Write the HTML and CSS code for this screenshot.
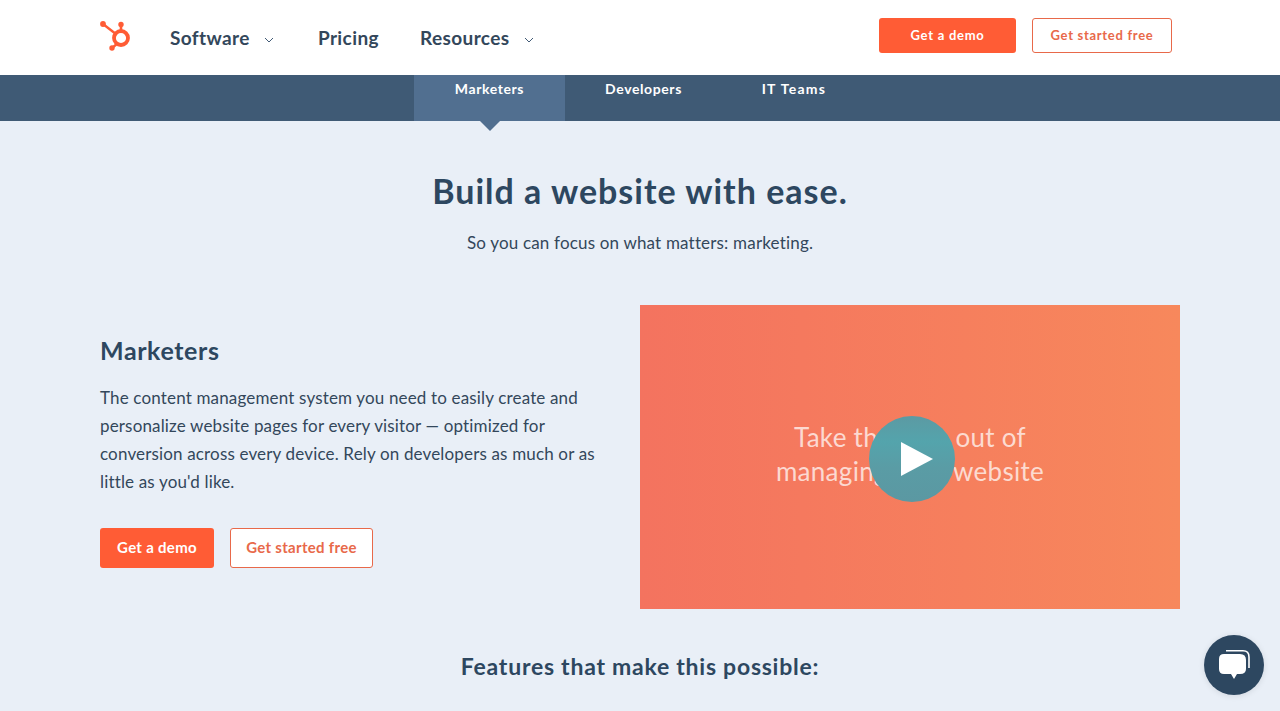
FILE: index.html
```html
<!DOCTYPE html>
<html lang="en">
<head>
<meta charset="utf-8">
<title>Build a website with ease</title>
<link rel="stylesheet" href="styles.css">
</head>
<body>
<header class="topbar">
  <div class="topbar-left">
    <a class="logo" href="#" aria-label="HubSpot">
      <svg width="32" height="33" viewBox="0 0 32 33" fill="none">
        <circle cx="21" cy="19" r="7" stroke="#ff5c35" stroke-width="3.800"/>
        <path d="M3 5 L16.500 15.500" stroke="#ff5c35" stroke-width="2.400"/>
        <circle cx="3" cy="5" r="2.900" fill="#ff5c35"/>
        <path d="M21 5 V12" stroke="#ff5c35" stroke-width="2.600"/>
        <circle cx="21" cy="5.500" r="2.700" fill="#ff5c35"/>
        <path d="M12 29 L17.500 24.500" stroke="#ff5c35" stroke-width="2.400"/>
        <circle cx="12" cy="29" r="2.700" fill="#ff5c35"/>
      </svg>
    </a>
    <nav class="mainnav">
      <a class="navitem navitem-software" href="#">Software<svg class="chev" width="10" height="6" viewBox="0 0 10 6"><path d="M1 1 L5 5 L9 1" fill="none" stroke="#425b76" stroke-width="1"/></svg></a>
      <a class="navitem navitem-pricing" href="#">Pricing</a>
      <a class="navitem" href="#">Resources<svg class="chev" width="10" height="6" viewBox="0 0 10 6"><path d="M1 1 L5 5 L9 1" fill="none" stroke="#425b76" stroke-width="1"/></svg></a>
    </nav>
  </div>
  <div class="topbar-right">
    <a class="btn btn-solid btn-small" href="#">Get a demo</a>
    <a class="btn btn-outline btn-small btn-small-outline" href="#">Get started free</a>
  </div>
</header>

<div class="tabs">
  <a class="tab tab-active" href="#">Marketers</a>
  <a class="tab" href="#">Developers</a>
  <a class="tab tab-wide" href="#">IT Teams</a>
</div>

<main class="content">
  <section class="intro">
    <h1>Build a website with ease.</h1>
    <p>So you can focus on what matters: marketing.</p>
  </section>

  <section class="feature">
    <div class="copy">
      <h2>Marketers</h2>
      <p>The content management system you need to easily create and personalize website pages for every visitor — optimized for conversion across every device. Rely on developers as much or as little as you'd like.</p>
      <div class="actions">
        <a class="btn btn-solid btn-large" href="#">Get a demo</a>
        <a class="btn btn-outline btn-large" href="#">Get started free</a>
      </div>
    </div>
    <div class="video">
      <div class="video-text">Take the pain out of<br>managing your website</div>
      <div class="play">
        <svg width="32" height="34" viewBox="0 0 32 34"><path d="M0 0 L32 17 L0 34 Z" fill="#fff"/></svg>
      </div>
    </div>
  </section>

  <h3 class="features-title">Features that make this possible:</h3>
</main>

<button class="chat" aria-label="Chat">
  <svg width="34" height="34" viewBox="0 0 34 34" fill="none">
    <path d="M9 2.800 H26 Q32 2.800 32 9 V20" stroke="#fff" stroke-width="1.600"/>
    <path d="M7 6 H23 Q29 6 29 12 V21 Q29 26 23 26 H20 L17 31 L14 26 H7 Q2 26 2 21 V11 Q2 6 7 6 Z" fill="#fff"/>
  </svg>
</button>
</body>
</html>
```
FILE: styles.css
```css
* { box-sizing: border-box; }
html, body { margin: 0; height: 711px; overflow: hidden; }
body {
  background: #e9eff7;
  color: #2d4760;
  font-family: "Lato", "Liberation Sans", sans-serif;
}
a { text-decoration: none; color: inherit; }

.topbar {
  height: 75px;
  background: #fff;
  display: flex;
  align-items: center;
  justify-content: space-between;
  padding: 0 108px 0 100px;
}
.topbar-left { display: flex; align-items: center; }
.logo { display: flex; width: 70px; height: 33px; margin-top: -4px; }
.mainnav { display: flex; align-items: center; }
.navitem {
  display: flex;
  align-items: center;
  font-size: 19px;
  font-weight: 700;
  letter-spacing: 0.4px;
  color: #33475b;
}
.navitem-software { margin-right: 44px; }
.navitem-pricing { margin-right: 41px; }
.chev { margin-left: 14px; margin-top: 4px; }

.topbar-right { display: flex; gap: 16px; margin-top: -4px; }
.btn {
  display: flex;
  align-items: center;
  justify-content: center;
  border-radius: 3px;
  padding-bottom: 2px;
  font-weight: 700;
  letter-spacing: 0.3px;
}
.btn-solid { background: #ff5c35; color: #fff; }
.btn-outline { background: #fff; color: #e8694a; border: 1px solid #e8694a; }
.btn-small { width: 137px; height: 35px; font-size: 13px; letter-spacing: 0.75px; }
.btn-small-outline { width: 140px; letter-spacing: 0.7px; }
.btn-large { height: 40px; font-size: 15px; }
.btn-large.btn-solid { width: 114px; }
.btn-large.btn-outline { width: 143px; }

.tabs {
  height: 46px;
  background: #3f5a75;
  display: grid;
  grid-template-columns: 151px 157px 144px;
  justify-content: center;
}
.tab {
  position: relative;
  padding-top: 5px;
  text-align: center;
  font-size: 14px;
  font-weight: 700;
  letter-spacing: 0.6px;
  color: #fff;
}
.tab-wide { letter-spacing: 1.3px; }
.tab-active { background: #516f90; }
.tab-active::after {
  content: "";
  position: absolute;
  left: 50%;
  top: 100%;
  margin-left: -10px;
  border-top: 10px solid #516f90;
  border-left: 10px solid transparent;
  border-right: 10px solid transparent;
}

.intro { text-align: center; padding-top: 50px; }
.intro h1 {
  margin: 0;
  font-size: 34px;
  line-height: 40px;
  font-weight: 700;
  letter-spacing: 1px;
  color: #2d4760;
}
.intro p {
  margin: 22px 0 0;
  font-size: 17px;
  line-height: 20px;
  letter-spacing: 0.18px;
  color: #33475b;
}

.feature {
  display: grid;
  grid-template-columns: 540px 540px;
  margin: 52px 0 0 100px;
}
.copy { padding-top: 30px; }
.copy h2 {
  margin: 0;
  font-size: 25px;
  line-height: 30px;
  font-weight: 700;
  letter-spacing: 0.6px;
  color: #2d4760;
}
.copy p {
  margin: 19px 0 0;
  width: 500px;
  font-size: 17px;
  line-height: 28px;
  letter-spacing: 0.16px;
  color: #33475b;
}
.actions { display: flex; gap: 16px; margin-top: 32px; }

.video {
  position: relative;
  height: 304px;
  background: linear-gradient(90deg, #f4735f 0%, #f67f5d 60%, #f7885c 100%);
  display: flex;
  align-items: center;
  justify-content: center;
}
.video-text {
  text-align: center;
  font-size: 26px;
  line-height: 34px;
  font-weight: 400;
  letter-spacing: 0.3px;
  color: rgba(255, 255, 255, 0.72);
  transform: translateY(-3px);
}
.play {
  position: absolute;
  left: 229px;
  top: 111px;
  width: 86px;
  height: 86px;
  border-radius: 50%;
  background: linear-gradient(180deg, #5c9aa3 0%, #54a4ac 30%, #5a9ca5 60%, #5b98a2 100%);
  display: flex;
  align-items: center;
  justify-content: center;
  padding-left: 10px;
}

.features-title {
  margin: 43px 0 0;
  text-align: center;
  font-size: 23px;
  line-height: 28px;
  font-weight: 700;
  letter-spacing: 0.75px;
  color: #2d4760;
}

.chat {
  position: fixed;
  left: 1204px;
  top: 635px;
  width: 60px;
  height: 60px;
  border: 0;
  padding: 0;
  border-radius: 50%;
  background: #2d4760;
  box-shadow: 0 1px 6px rgba(0, 0, 0, 0.1);
  display: flex;
  align-items: center;
  justify-content: center;
}
```
